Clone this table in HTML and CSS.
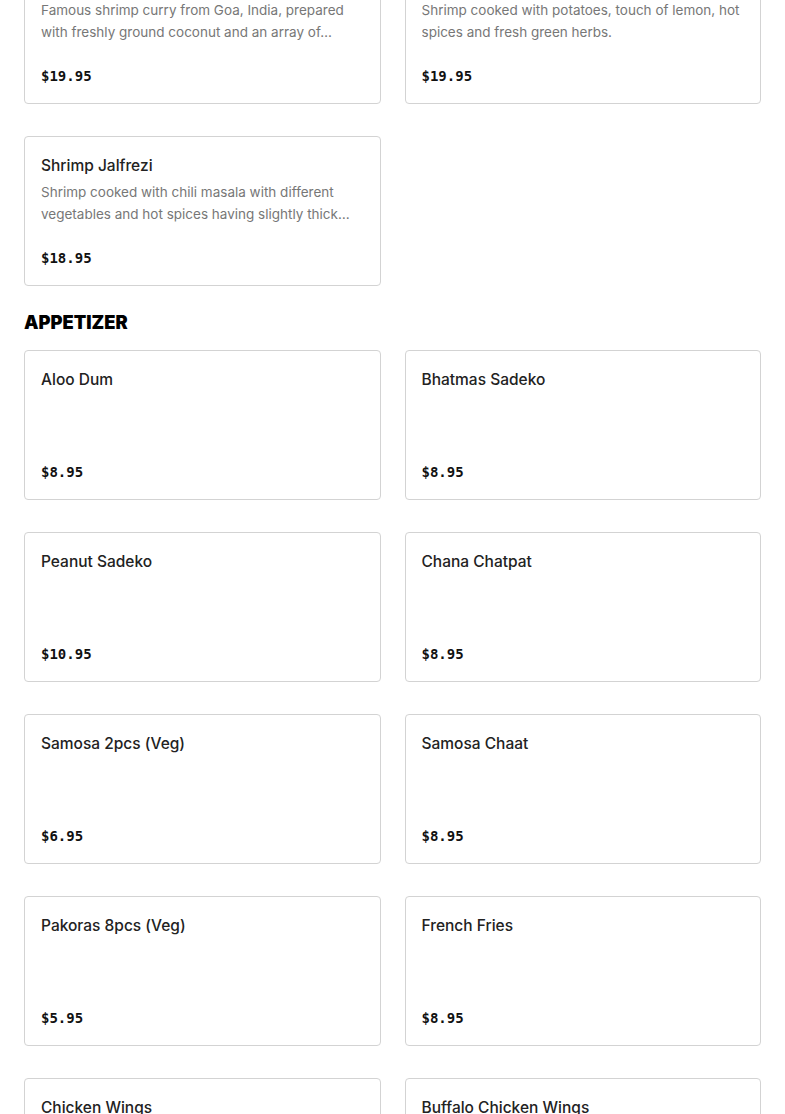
FILE: index.html
```html
<!DOCTYPE html>
<html lang="en">
<head>
<meta charset="utf-8">
<title>Menu</title>
<link rel="stylesheet" href="styles.css">
</head>
<body>
<main class="menu">
  <section class="section section-first">
    <div class="grid">
      <article class="card">
        <h3 class="card-title">Goan Shrimp Curry</h3>
        <p class="card-desc">Famous shrimp curry from Goa, India, prepared with freshly ground coconut and an array of…</p>
        <div class="card-price">$19.95</div>
      </article>
      <article class="card">
        <h3 class="card-title">Shrimp Aloo</h3>
        <p class="card-desc">Shrimp cooked with potatoes, touch of lemon, hot spices and fresh green herbs.</p>
        <div class="card-price">$19.95</div>
      </article>
      <article class="card">
        <h3 class="card-title">Shrimp Jalfrezi</h3>
        <p class="card-desc">Shrimp cooked with chili masala with different vegetables and hot spices having slightly thick…</p>
        <div class="card-price">$18.95</div>
      </article>
    </div>
  </section>
  <section class="section">
    <h2 class="section-title">APPETIZER</h2>
    <div class="grid">
      <article class="card"><h3 class="card-title">Aloo Dum</h3><div class="card-price">$8.95</div></article>
      <article class="card"><h3 class="card-title">Bhatmas Sadeko</h3><div class="card-price">$8.95</div></article>
      <article class="card"><h3 class="card-title">Peanut Sadeko</h3><div class="card-price">$10.95</div></article>
      <article class="card"><h3 class="card-title">Chana Chatpat</h3><div class="card-price">$8.95</div></article>
      <article class="card"><h3 class="card-title">Samosa 2pcs (Veg)</h3><div class="card-price">$6.95</div></article>
      <article class="card"><h3 class="card-title">Samosa Chaat</h3><div class="card-price">$8.95</div></article>
      <article class="card"><h3 class="card-title">Pakoras 8pcs (Veg)</h3><div class="card-price">$5.95</div></article>
      <article class="card"><h3 class="card-title">French Fries</h3><div class="card-price">$8.95</div></article>
      <article class="card"><h3 class="card-title">Chicken Wings</h3><div class="card-price">$10.95</div></article>
      <article class="card"><h3 class="card-title">Buffalo Chicken Wings</h3><div class="card-price">$11.95</div></article>
    </div>
  </section>
</main>
</body>
</html>
```
FILE: styles.css
```css
* { box-sizing: border-box; }
html, body { margin: 0; padding: 0; background: #fff; }
body {
  font-family: "Inter", "Liberation Sans", sans-serif;
  color: #1f1f1f;
}
.menu {
  padding: 0 24px 40px;
}
.section-first {
  margin-top: -46px;
}
.section-title {
  margin: 24px 0 16px;
  font-family: "Inter", "Liberation Sans", sans-serif;
  font-size: 18.3px;
  line-height: 24px;
  font-weight: 900;
  color: #000;
  letter-spacing: 0;
}
.grid {
  display: grid;
  grid-template-columns: 1fr 1fr;
  column-gap: 24px;
  row-gap: 32px;
}
.card {
  height: 150px;
  border: 1px solid #d3d3d3;
  border-radius: 4px;
  padding: 16px;
  display: flex;
  flex-direction: column;
  background: #fff;
}
.card-title {
  margin: 0;
  padding-top: 1px;
  font-size: 15.5px;
  line-height: 24px;
  font-weight: 500;
  color: #222;
}
.card-desc {
  margin: 3px 0 0;
  font-size: 13.5px;
  line-height: 22px;
  color: #777;
  display: -webkit-box;
  -webkit-line-clamp: 2;
  -webkit-box-orient: vertical;
  overflow: hidden;
}
.card-price {
  margin-top: auto;
  font-family: "DejaVu Sans Mono", "Liberation Mono", monospace;
  font-size: 14px;
  line-height: 22px;
  font-weight: 700;
  color: #111;
}
```
